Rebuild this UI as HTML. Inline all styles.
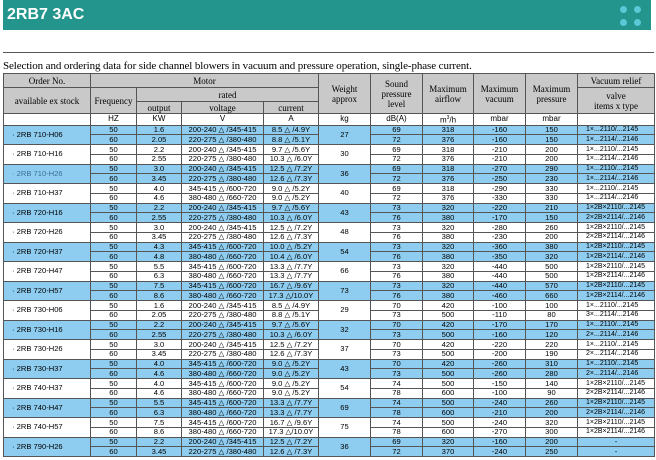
<!DOCTYPE html>
<html><head><meta charset="utf-8"><style>
body{margin:0;width:656px;height:460px;background:#fff;position:relative;overflow:hidden;font-family:"Liberation Sans",Arial,sans-serif}
.bar{position:absolute;left:3px;top:0;width:648px;height:30px;background:#23958c}
.bar span{position:absolute;left:4px;top:6px;color:#fff;font-weight:bold;font-size:16px}
.dot{position:absolute;width:7px;height:7px;border-radius:50%;background:#5cc8d6}
.line{position:absolute;left:3px;top:52px;width:651px;height:1px;background:#555}
.cap{position:absolute;left:3px;top:60px;font-family:"Liberation Serif",serif;font-size:11px;white-space:nowrap;letter-spacing:-0.1px}
table{position:absolute;left:3px;top:73px;width:651px;border-collapse:collapse;table-layout:fixed}
td{border:1px solid #555;padding:0;text-align:center;font-size:7.6px;line-height:8px;white-space:nowrap;overflow:hidden}
thead td{background:#c9c9c9;font-family:"Liberation Serif",serif;font-size:9px;line-height:10px}
tr.u td{background:#fff;font-size:8px}
tr.d td{height:8.75px}
tr.b td{background:#8ecdf0}
td.m{text-align:left;padding-left:8px;font-size:7.6px}
td.v{text-align:left;padding-left:8px;font-size:7px}
</style></head><body>
<div class="bar"><span>2RB7 3AC</span></div>
<div class="dot" style="left:620px;top:6px"></div><div class="dot" style="left:634px;top:6px"></div>
<div class="dot" style="left:620px;top:19px"></div><div class="dot" style="left:634px;top:19px"></div>
<div class="line"></div>
<div class="cap">Selection and ordering data for side channel blowers in vacuum and pressure operation, single-phase current.</div>
<table>
<colgroup><col style="width:87px"><col style="width:46px"><col style="width:45px"><col style="width:82px"><col style="width:55px"><col style="width:52px"><col style="width:52px"><col style="width:51px"><col style="width:52px"><col style="width:52px"><col style="width:77px"></colgroup>
<thead>
<tr style="height:14px"><td>Order No.</td><td colspan="4">Motor</td><td rowspan="3">Weight<br>approx</td><td rowspan="3">Sound<br>pressure<br>level</td><td rowspan="3">Maximum<br>airflow</td><td rowspan="3">Maximum<br>vacuum</td><td rowspan="3">Maximum<br>pressure</td><td>Vacuum relief</td></tr>
<tr style="height:14px"><td rowspan="2">available ex stock</td><td rowspan="2">Frequency</td><td colspan="3">rated</td><td rowspan="2">valve<br>items x type</td></tr>
<tr style="height:12px"><td>output</td><td>voltage</td><td>current</td></tr>
</thead>
<tbody>
<tr class="u" style="height:11px"><td></td><td>HZ</td><td>KW</td><td>V</td><td>A</td><td>kg</td><td>dB(A)</td><td>m<sup style="font-size:5px">3</sup>/h</td><td>mbar</td><td>mbar</td><td></td></tr>
<tr class="d b"><td class="m" rowspan="2">· 2RB 710-H06</td><td>50</td><td>1.6</td><td>200-240 △ /345-415</td><td>8.5 △ /4.9Y</td><td rowspan="2">27</td><td>69</td><td>318</td><td>-160</td><td>150</td><td class="v">1×...2110/...2145</td></tr>
<tr class="d b"><td>60</td><td>2.05</td><td>220-275 △ /380-480</td><td>8.8 △ /5.1Y</td><td>72</td><td>376</td><td>-160</td><td>150</td><td class="v">1×...2114/...2146</td></tr>
<tr class="d"><td class="m" rowspan="2">· 2RB 710-H16</td><td>50</td><td>2.2</td><td>200-240 △ /345-415</td><td>9.7 △ /5.6Y</td><td rowspan="2">30</td><td>69</td><td>318</td><td>-210</td><td>200</td><td class="v">1×...2110/...2145</td></tr>
<tr class="d"><td>60</td><td>2.55</td><td>220-275 △ /380-480</td><td>10.3 △ /6.0Y</td><td>72</td><td>376</td><td>-210</td><td>200</td><td class="v">1×...2114/...2146</td></tr>
<tr class="d b"><td class="m" rowspan="2" style="color:#3a6e9a">· 2RB 710-H26</td><td>50</td><td>3.0</td><td>200-240 △ /345-415</td><td>12.5 △ /7.2Y</td><td rowspan="2">36</td><td>69</td><td>318</td><td>-270</td><td>290</td><td class="v">1×...2110/...2145</td></tr>
<tr class="d b"><td>60</td><td>3.45</td><td>220-275 △ /380-480</td><td>12.6 △ /7.3Y</td><td>72</td><td>376</td><td>-250</td><td>230</td><td class="v">1×...2114/...2146</td></tr>
<tr class="d"><td class="m" rowspan="2">· 2RB 710-H37</td><td>50</td><td>4.0</td><td>345-415 △ /600-720</td><td>9.0 △ /5.2Y</td><td rowspan="2">40</td><td>69</td><td>318</td><td>-290</td><td>330</td><td class="v">1×...2110/...2145</td></tr>
<tr class="d"><td>60</td><td>4.6</td><td>380-480 △ /660-720</td><td>9.0 △ /5.2Y</td><td>72</td><td>376</td><td>-330</td><td>330</td><td class="v">1×...2114/...2146</td></tr>
<tr class="d b"><td class="m" rowspan="2">· 2RB 720-H16</td><td>50</td><td>2.2</td><td>200-240 △ /345-415</td><td>9.7 △ /5.6Y</td><td rowspan="2">43</td><td>73</td><td>320</td><td>-220</td><td>210</td><td class="v">1×2B×2110/...2145</td></tr>
<tr class="d b"><td>60</td><td>2.55</td><td>220-275 △ /380-480</td><td>10.3 △ /6.0Y</td><td>76</td><td>380</td><td>-170</td><td>150</td><td class="v">2×2B×2114/...2146</td></tr>
<tr class="d"><td class="m" rowspan="2">· 2RB 720-H26</td><td>50</td><td>3.0</td><td>200-240 △ /345-415</td><td>12.5 △ /7.2Y</td><td rowspan="2">48</td><td>73</td><td>320</td><td>-280</td><td>260</td><td class="v">1×2B×2110/...2145</td></tr>
<tr class="d"><td>60</td><td>3.45</td><td>220-275 △ /380-480</td><td>12.6 △ /7.3Y</td><td>76</td><td>380</td><td>-230</td><td>200</td><td class="v">2×2B×2114/...2146</td></tr>
<tr class="d b"><td class="m" rowspan="2">· 2RB 720-H37</td><td>50</td><td>4.3</td><td>345-415 △ /600-720</td><td>10.0 △ /5.2Y</td><td rowspan="2">54</td><td>73</td><td>320</td><td>-360</td><td>380</td><td class="v">1×2B×2110/...2145</td></tr>
<tr class="d b"><td>60</td><td>4.8</td><td>380-480 △ /660-720</td><td>10.4 △ /6.0Y</td><td>76</td><td>380</td><td>-350</td><td>320</td><td class="v">1×2B×2114/...2146</td></tr>
<tr class="d"><td class="m" rowspan="2">· 2RB 720-H47</td><td>50</td><td>5.5</td><td>345-415 △ /600-720</td><td>13.3 △ /7.7Y</td><td rowspan="2">66</td><td>73</td><td>320</td><td>-440</td><td>500</td><td class="v">1×2B×2110/...2145</td></tr>
<tr class="d"><td>60</td><td>6.3</td><td>380-480 △ /660-720</td><td>13.3 △ /7.7Y</td><td>76</td><td>380</td><td>-440</td><td>500</td><td class="v">1×2B×2114/...2146</td></tr>
<tr class="d b"><td class="m" rowspan="2">· 2RB 720-H57</td><td>50</td><td>7.5</td><td>345-415 △ /600-720</td><td>16.7 △ /9.6Y</td><td rowspan="2">73</td><td>73</td><td>320</td><td>-440</td><td>570</td><td class="v">1×2B×2110/...2145</td></tr>
<tr class="d b"><td>60</td><td>8.6</td><td>380-480 △ /660-720</td><td>17.3 △/10.0Y</td><td>76</td><td>380</td><td>-460</td><td>660</td><td class="v">1×2B×2114/...2146</td></tr>
<tr class="d"><td class="m" rowspan="2">· 2RB 730-H06</td><td>50</td><td>1.6</td><td>200-240 △ /345-415</td><td>8.5 △ /4.9Y</td><td rowspan="2">29</td><td>70</td><td>420</td><td>-100</td><td>100</td><td class="v">1×...2110/...2145</td></tr>
<tr class="d"><td>60</td><td>2.05</td><td>220-275 △ /380-480</td><td>8.8 △ /5.1Y</td><td>73</td><td>500</td><td>-110</td><td>80</td><td class="v">3×...2114/...2146</td></tr>
<tr class="d b"><td class="m" rowspan="2">· 2RB 730-H16</td><td>50</td><td>2.2</td><td>200-240 △ /345-415</td><td>9.7 △ /5.6Y</td><td rowspan="2">32</td><td>70</td><td>420</td><td>-170</td><td>170</td><td class="v">1×...2110/...2145</td></tr>
<tr class="d b"><td>60</td><td>2.55</td><td>220-275 △ /380-480</td><td>10.3 △ /6.0Y</td><td>73</td><td>500</td><td>-160</td><td>120</td><td class="v">2×...2114/...2146</td></tr>
<tr class="d"><td class="m" rowspan="2">· 2RB 730-H26</td><td>50</td><td>3.0</td><td>200-240 △ /345-415</td><td>12.5 △ /7.2Y</td><td rowspan="2">37</td><td>70</td><td>420</td><td>-220</td><td>220</td><td class="v">1×...2110/...2145</td></tr>
<tr class="d"><td>60</td><td>3.45</td><td>220-275 △ /380-480</td><td>12.6 △ /7.3Y</td><td>73</td><td>500</td><td>-200</td><td>190</td><td class="v">2×...2114/...2146</td></tr>
<tr class="d b"><td class="m" rowspan="2">· 2RB 730-H37</td><td>50</td><td>4.0</td><td>345-415 △ /600-720</td><td>9.0 △ /5.2Y</td><td rowspan="2">43</td><td>70</td><td>420</td><td>-260</td><td>310</td><td class="v">1×...2110/...2145</td></tr>
<tr class="d b"><td>60</td><td>4.6</td><td>380-480 △ /660-720</td><td>9.0 △ /5.2Y</td><td>73</td><td>500</td><td>-260</td><td>280</td><td class="v">2×...2114/...2146</td></tr>
<tr class="d"><td class="m" rowspan="2">· 2RB 740-H37</td><td>50</td><td>4.0</td><td>345-415 △ /600-720</td><td>9.0 △ /5.2Y</td><td rowspan="2">54</td><td>74</td><td>500</td><td>-150</td><td>140</td><td class="v">1×2B×2110/...2145</td></tr>
<tr class="d"><td>60</td><td>4.6</td><td>380-480 △ /660-720</td><td>9.0 △ /5.2Y</td><td>78</td><td>600</td><td>-100</td><td>90</td><td class="v">2×2B×2114/...2146</td></tr>
<tr class="d b"><td class="m" rowspan="2">· 2RB 740-H47</td><td>50</td><td>5.5</td><td>345-415 △ /600-720</td><td>13.3 △ /7.7Y</td><td rowspan="2">69</td><td>74</td><td>500</td><td>-240</td><td>260</td><td class="v">1×2B×2110/...2145</td></tr>
<tr class="d b"><td>60</td><td>6.3</td><td>380-480 △ /660-720</td><td>13.3 △ /7.7Y</td><td>78</td><td>600</td><td>-210</td><td>200</td><td class="v">2×2B×2114/...2146</td></tr>
<tr class="d"><td class="m" rowspan="2">· 2RB 740-H57</td><td>50</td><td>7.5</td><td>345-415 △ /600-720</td><td>16.7 △ /9.6Y</td><td rowspan="2">75</td><td>74</td><td>500</td><td>-240</td><td>320</td><td class="v">1×2B×2110/...2145</td></tr>
<tr class="d"><td>60</td><td>8.6</td><td>380-480 △ /660-720</td><td>17.3 △/10.0Y</td><td>78</td><td>600</td><td>-270</td><td>300</td><td class="v">1×2B×2114/...2146</td></tr>
<tr class="d b"><td class="m" rowspan="2">· 2RB 790-H26</td><td>50</td><td>2.2</td><td>200-240 △ /345-415</td><td>12.5 △ /7.2Y</td><td rowspan="2">36</td><td>69</td><td>320</td><td>-160</td><td>200</td><td>-</td></tr>
<tr class="d b"><td>60</td><td>3.45</td><td>220-275 △ /380-480</td><td>12.6 △ /7.3Y</td><td>72</td><td>370</td><td>-240</td><td>250</td><td>-</td></tr>
</tbody></table>
</body></html>
